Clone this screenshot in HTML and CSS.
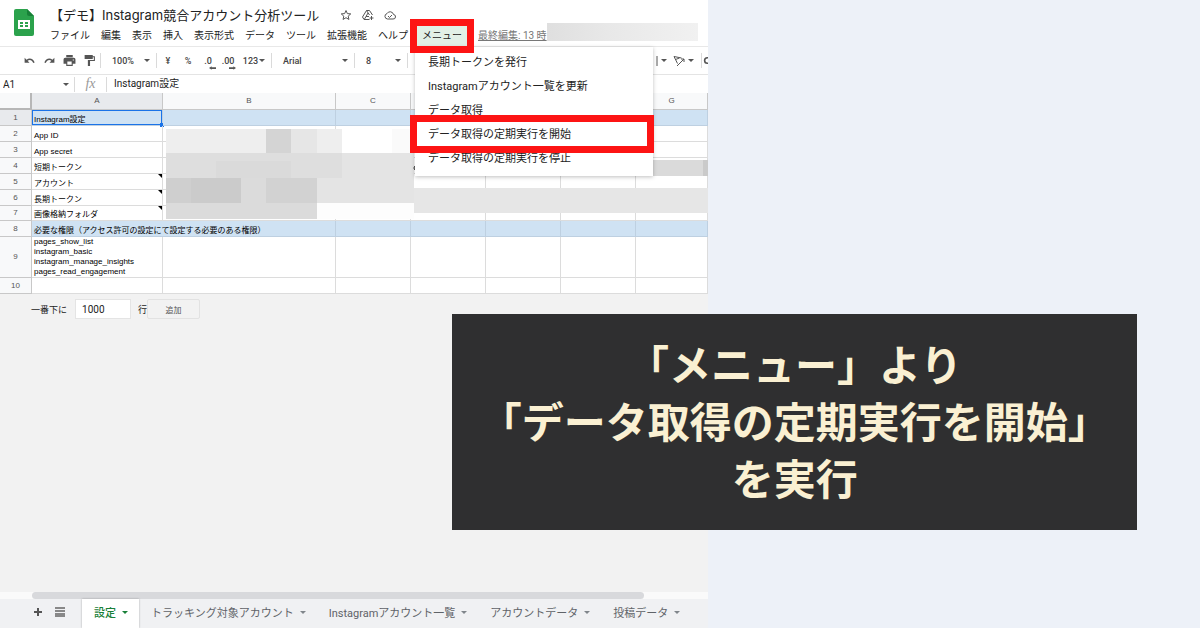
FILE: index.html
```html
<!DOCTYPE html>
<html lang="ja">
<head>
    <meta charset="UTF-8">
    <meta name="viewport" content="width=device-width, initial-scale=1.0">
    <title>【デモ】Instagram競合アカウント分析ツール</title>
    <link rel="stylesheet" href="styles.css">
</head>
<body>
    <main class="sheet">
        <header class="header">
            <svg class="logo" viewBox="0 0 20 27" aria-hidden="true">
                <path d="M2 0h11l7 7v18a2 2 0 0 1-2 2H2a2 2 0 0 1-2-2V2a2 2 0 0 1 2-2z" fill="#2ba24c"/>
                <path d="M13 0l7 7h-5a2 2 0 0 1-2-2z" fill="#188038"/>
                <path d="M4 11h12v9H4zM6 13v2h3v-2zM11 13v2h3v-2zM6 16v2h3v-2zM11 16v2h3v-2z" fill="#fff" fill-rule="evenodd"/>
            </svg>
            <div class="heading">
                <div class="title-row">
                    <h1>【デモ】Instagram競合アカウント分析ツール</h1>
                    <button class="icon-btn" aria-label="スター"><svg viewBox="0 0 24 24"><path d="M12 3l2.700 6.200 6.800.6-5.100 4.500 1.500 6.600L12 17.400l-5.900 3.500 1.500-6.600-5.100-4.500 6.800-.6z" fill="none" stroke="#555" stroke-width="2" stroke-linejoin="round"/></svg></button>
                    <button class="icon-btn" aria-label="移動"><svg viewBox="0 0 24 24"><path d="M15 21H4l-3-5L9 3h6l6 9M9 3l6 9M5 20l3-5h6M12 8l-4 7" fill="none" stroke="#555" stroke-width="2" stroke-linejoin="round"/><path d="M19 14v8M15 18h8" stroke="#555" stroke-width="2"/></svg></button>
                    <button class="icon-btn" aria-label="保存済み"><svg viewBox="0 0 24 24"><path d="M7 20a5.500 5.500 0 0 1-1-10.800A7 7 0 0 1 19 11a4.500 4.500 0 0 1-1 9z" fill="none" stroke="#555" stroke-width="2"/><path d="M8 14l3 3 5-5" fill="none" stroke="#555" stroke-width="2"/></svg></button>
                </div>
                <nav class="menus">
                    <button>ファイル</button>
                    <button>編集</button>
                    <button>表示</button>
                    <button>挿入</button>
                    <button>表示形式</button>
                    <button>データ</button>
                    <button>ツール</button>
                    <button>拡張機能</button>
                    <button>ヘルプ</button>
                    <div class="menu-open marked">
                        <button class="active">メニュー</button>
                        <div class="dropdown">
                            <button>長期トークンを発行</button>
                            <button>Instagramアカウント一覧を更新</button>
                            <button>データ取得</button>
                            <button class="marked">データ取得の定期実行を開始</button>
                            <button>データ取得の定期実行を停止</button>
                        </div>
                    </div>
                    <a href="#" class="last-edit">最終編集: 13 時</a>
                    <span class="masked"></span>
                </nav>
            </div>
        </header>

        <div class="toolbar">
            <button class="tool" aria-label="元に戻す"><svg viewBox="0 0 24 24"><path d="M3 7v9h9l-3.500-3.500c4-3 8-1.500 10.500 4l2.500-1C19 8.500 12 6 6.500 10.500z" fill="#555"/></svg></button>
            <button class="tool" aria-label="やり直し"><svg viewBox="0 0 24 24"><path d="M21 7v9h-9l3.500-3.500c-4-3-8-1.500-10.500 4l-2.500-1C5 8.500 12 6 17.500 10.500z" fill="#555"/></svg></button>
            <button class="tool" aria-label="印刷"><svg viewBox="0 0 24 24"><path d="M6 2h12v4H6zM4 7h16a3 3 0 0 1 3 3v8h-5v4H6v-4H1v-8a3 3 0 0 1 3-3zM8 14v6h8v-6zM18 10v2h2v-2z" fill="#555" fill-rule="evenodd"/></svg></button>
            <button class="tool" aria-label="書式を貼り付け"><svg viewBox="0 0 24 24"><path d="M3 2h15v2h4v9h-9v9h-4V11h11V6h-2v3H3z" fill="#555"/></svg></button>
            <span class="sep"></span>
            <button class="tool zoom">100% <i class="caret"></i></button>
            <span class="sep"></span>
            <button class="tool">¥</button>
            <button class="tool">%</button>
            <button class="tool decimal">.0<svg viewBox="0 0 8 4"><path d="M0 2l3-2v1h5v2H3v1z" fill="#555"/></svg></button>
            <button class="tool decimal">.00<svg viewBox="0 0 8 4"><path d="M8 2L5 0v1H0v2h5v1z" fill="#555"/></svg></button>
            <button class="tool number">123<i class="caret"></i></button>
            <span class="sep"></span>
            <button class="tool font">Arial <i class="caret"></i></button>
            <span class="sep"></span>
            <button class="tool size">8 <i class="caret"></i></button>
            <span class="sep"></span>
            <div class="tools-end">
                <button class="tool rotate" aria-label="折り返し"><svg viewBox="0 0 4 12"><path d="M3 1v10" stroke="#555" stroke-width="1"/></svg><i class="caret"></i></button>
                <button class="tool rotate" aria-label="回転"><svg viewBox="0 0 24 24"><path d="M2 3l15 3M2 3l7 14M5 9l8-3M8 22L22 8M22 8v6M22 8h-6" fill="none" stroke="#555" stroke-width="2"/></svg><i class="caret"></i></button>
                <span class="sep"></span>
                <button class="tool cut" aria-label="リンク"><svg viewBox="0 0 24 24"><path d="M12 7H8a5 5 0 0 0 0 10h4" fill="none" stroke="#555" stroke-width="3"/></svg></button>
            </div>
        </div>

        <div class="formula-bar">
            <input class="name-box" type="text" value="A1" aria-label="名前ボックス">
            <i class="caret"></i>
            <span class="sep"></span>
            <span class="fx">fx</span>
            <span class="sep"></span>
            <input class="formula" type="text" value="Instagram設定" aria-label="数式">
        </div>

        <div class="grid">
            <table>
                <colgroup>
                    <col class="col-num"><col class="col-a"><col class="col-b"><col class="col"><col class="col"><col class="col"><col class="col"><col>
                </colgroup>
                <thead>
                    <tr><th class="corner"></th><th class="selected">A</th><th>B</th><th>C</th><th>D</th><th>E</th><th>F</th><th>G</th></tr>
                </thead>
                <tbody>
                    <tr class="blue"><th class="selected">1</th><td class="cursor">Instagram設定</td><td></td><td></td><td></td><td></td><td></td><td></td></tr>
                    <tr><th>2</th><td>App ID</td><td></td><td></td><td></td><td></td><td></td><td></td></tr>
                    <tr><th>3</th><td>App secret</td><td></td><td></td><td></td><td></td><td></td><td></td></tr>
                    <tr><th>4</th><td>短期トークン</td><td></td><td></td><td></td><td></td><td></td><td></td></tr>
                    <tr><th>5</th><td class="note">アカウント</td><td></td><td></td><td></td><td></td><td></td><td></td></tr>
                    <tr><th>6</th><td class="note">長期トークン</td><td></td><td></td><td></td><td></td><td></td><td></td></tr>
                    <tr class="short"><th>7</th><td class="note">画像格納フォルダ</td><td></td><td></td><td></td><td></td><td></td><td></td></tr>
                    <tr class="blue"><th>8</th><td colspan="2">必要な権限（アクセス許可の設定にて設定する必要のある権限）</td><td></td><td></td><td></td><td></td><td></td></tr>
                    <tr class="tall"><th>9</th><td>pages_show_list<br>instagram_basic<br>instagram_manage_insights<br>pages_read_engagement</td><td></td><td></td><td></td><td></td><td></td><td></td></tr>
                    <tr><th>10</th><td></td><td></td><td></td><td></td><td></td><td></td><td></td></tr>
                </tbody>
            </table>
            <!-- masked cell values -->
            <svg class="mosaic" viewBox="0 0 545 96" aria-hidden="true">
                <path d="M3 4h176v24H3z" fill="#eeeeee"/>
                <path d="M103 4h25v24h-25z" fill="#d4d4d4"/>
                <path d="M128 4h26v24h-26z" fill="#e6e6e6"/>
                <path d="M179 4h73v24h-73z" fill="#ffffff"/>
                <path d="M229 4h23v24h-23z" fill="#fafafa"/>
                <path d="M3 28h248v50H3z" fill="#e4e4e4"/>
                <path d="M3 28h176v25H3z" fill="#dedede"/>
                <path d="M53 36h75v17H53z" fill="#dadada"/>
                <path d="M3 53h151v41H3z" fill="#dbdbdb"/>
                <path d="M3 53h75v25H3z" fill="#cbcbcb"/>
                <path d="M3 53h25v25H3z" fill="#cfcfcf"/>
                <path d="M103 53h51v25h-51z" fill="#d2d2d2"/>
                <path d="M154 78h97v16h-97z" fill="#fdfdfd"/>
                <path d="M251 63h294v25H251z" fill="#e6e6e6"/>
                <path d="M490 35h55v16h-55z" fill="#dadada"/>
                <path d="M540 35h5v16h-5z" fill="#cacaca"/>
                <path d="M253 41a2 2 0 0 0 0 4" fill="none" stroke="#222" stroke-width="1"/>
            </svg>
        </div>

        <form class="add-rows">
            <label for="rows">一番下に</label>
            <input id="rows" type="text" value="1000">
            <span>行</span>
            <button type="button">追加</button>
        </form>

        <footer class="footer">
            <div class="scroll"><div class="thumb"></div></div>
            <div class="tabs">
                <button class="tab-tool" aria-label="シートを追加"><svg viewBox="0 0 10 10"><path d="M5 1v8M1 5h8" stroke="#555" stroke-width="2"/></svg></button>
                <button class="tab-tool" aria-label="すべてのシート"><svg viewBox="0 0 10 10"><path d="M0 1h10M0 4h10M0 7h10M0 9h10" stroke="#666" stroke-width="1.400"/></svg></button>
                <button class="tab current">設定<i class="caret"></i></button>
                <button class="tab">トラッキング対象アカウント<i class="caret"></i></button>
                <button class="tab">Instagramアカウント一覧<i class="caret"></i></button>
                <button class="tab">アカウントデータ<i class="caret"></i></button>
                <button class="tab">投稿データ<i class="caret"></i></button>
            </div>
        </footer>
    </main>

    <p class="caption">「メニュー」より<br>「データ取得の定期実行を開始」<br>を実行</p>
</body>
</html>
```
FILE: styles.css
```css
* {
    box-sizing: border-box;
}
body {
    position: relative;
    margin: 0;
    min-height: 100vh;
    background: #edf1f8;
    font-family: Roboto, "Noto Sans CJK JP", sans-serif;
    font-size: 10px;
    color: #222;
}
button, input {
    font: inherit;
    color: inherit;
    background: none;
    border: none;
    padding: 0;
    margin: 0;
    white-space: nowrap;
}
svg {
    display: block;
}
.sheet {
    width: 59%;
    min-height: 100vh;
    display: flex;
    flex-direction: column;
    background: #f2f2f2;
    overflow: hidden;
}

/* title and menus */
.header {
    display: flex;
    height: 47px;
    padding: 5px 10px 0 14px;
    background: #fff;
    border-bottom: 1px solid #e8e8e8;
}
.logo {
    width: 20px;
    height: 27px;
    margin: 4px 16px 0 0;
}
.heading {
    flex: 1;
}
.title-row {
    display: flex;
    align-items: center;
    height: 20px;
    gap: 10px;
}
h1 {
    margin: 0 11px 0 0;
    font-family: Inter, "Noto Sans CJK JP", sans-serif;
    font-size: 13px;
    font-weight: 400;
    line-height: 20px;
    white-space: nowrap;
}
.icon-btn svg {
    width: 12px;
    height: 12px;
}
.menus {
    display: flex;
    align-items: center;
    gap: 11px;
    height: 22px;
    line-height: 20px;
}
.menu-open {
    position: relative;
    margin-left: -2px;
}
.active {
    padding: 0 5px;
    background: #e2f0e6;
}
.last-edit {
    color: #777;
    white-space: nowrap;
}
.masked {
    flex: 1;
    height: 18px;
    margin: -8px 0 0 -11px;
    background: linear-gradient(90deg, #dfdfdf, #e8e8e8 40%, #f1f1f1);
}
.dropdown {
    position: absolute;
    top: 21px;
    left: -2px;
    width: 238px;
    padding: 4px 0 5px;
    background: #fff;
    box-shadow: 0 1px 4px rgba(0, 0, 0, 0.25);
    z-index: 2;
}
.dropdown button {
    display: block;
    width: 100%;
    height: 24px;
    padding-left: 13px;
    font-size: 11px;
    line-height: 24px;
    text-align: left;
}
/* red frames */
.marked {
    position: relative;
}
.marked::after {
    content: "";
    position: absolute;
    inset: -7px;
    border: 7px solid #fd1414;
    z-index: 3;
}
.dropdown .marked::after {
    inset: -8px -1px -6px -5px;
}

/* toolbar */
.toolbar {
    display: flex;
    align-items: center;
    height: 28px;
    padding-left: 19px;
    background: #fff;
    border-bottom: 1px solid #e4e4e4;
    font-size: 9px;
    font-weight: 500;
    color: #444;
}
.tool {
    display: flex;
    align-items: center;
    justify-content: center;
    width: 20px;
    height: 20px;
}
.tool svg {
    width: 13px;
    height: 13px;
}
.caret {
    flex: none;
    border: 3px solid transparent;
    border-top-color: #555;
    border-bottom: 0;
}
.sep {
    flex: none;
    width: 1px;
    height: 15px;
    background: #dadada;
}
.toolbar .sep {
    margin: 0 1px;
}
.tool.zoom, .tool.font, .tool.size {
    justify-content: space-between;
    padding: 0 5px 0 10px;
}
.tool.zoom {
    width: 53px;
}
.tool.font {
    width: 80px;
}
.tool.size {
    width: 50px;
}
.tool.number {
    width: 32px;
    gap: 1px;
}
.tool.decimal {
    position: relative;
}
.decimal svg {
    position: absolute;
    right: 2px;
    bottom: 1px;
    width: 7px;
    height: 4px;
}
.tools-end {
    display: flex;
    align-items: center;
    margin-left: auto;
}
.tool.rotate {
    width: auto;
    gap: 3px;
    margin-right: 6px;
}
.rotate svg {
    width: auto;
    height: 12px;
}
.tool.cut {
    width: 5px;
    justify-content: flex-start;
    overflow: hidden;
}
.cut svg {
    flex: none;
}

/* formula bar */
.formula-bar {
    display: flex;
    align-items: center;
    height: 18px;
    background: #fff;
}
.name-box {
    width: 63px;
    padding-left: 3px;
}
.formula-bar .caret {
    margin-right: 5px;
}
.fx {
    width: 31px;
    text-align: center;
    font: italic 14px "Liberation Serif", serif;
    color: #999;
}
.formula {
    flex: 1;
    padding-left: 7px;
    line-height: 16px;
}

/* cells */
.grid {
    position: relative;
}
table {
    width: 100%;
    table-layout: fixed;
    border-collapse: separate;
    border-spacing: 0;
    background: #fff;
    font-family: "Liberation Sans", "Noto Sans CJK JP", sans-serif;
    font-size: 8px;
    color: #000;
}
.col-num {
    width: 32px;
}
.col-a {
    width: 131px;
}
.col-b {
    width: 173px;
}
.col {
    width: 75px;
}
th, td {
    height: 16px;
    padding: 0;
    border-right: 1px solid #dcdcdc;
    border-bottom: 1px solid #dcdcdc;
    line-height: 10px;
}
thead th {
    height: 17px;
}
th {
    background: #f8f9fa;
    border-color: #c8c8c8;
    font-weight: 400;
    color: #555;
}
th.selected {
    background: #e8eaed;
}
th.corner {
    border-right: 2px solid #b7b7b7;
    border-bottom: 2px solid #b7b7b7;
}
td {
    position: relative;
    padding: 4px 0 0 2px;
    text-align: left;
    white-space: nowrap;
}
.short th, .short td {
    height: 15px;
}
.blue td {
    background: #cfe2f3;
    border-color: #bed0e1;
}
.tall td {
    height: 41px;
    padding: 0 0 0 2px;
}
td.cursor {
    box-shadow: inset 0 0 0 1px #1a73e8;
}
.cursor::after {
    content: "";
    position: absolute;
    right: -2px;
    bottom: -2px;
    width: 4px;
    height: 4px;
    background: #1a73e8;
}
.note::after {
    content: "";
    position: absolute;
    top: 0;
    right: 0;
    border-top: 4px solid #000;
    border-left: 4px solid transparent;
}
.mosaic {
    position: absolute;
    top: 32px;
    left: 163px;
    width: 545px;
    height: 96px;
}

/* add rows */
.add-rows {
    display: flex;
    align-items: center;
    padding: 5px 0 0 31px;
    font-size: 9px;
}
.add-rows input {
    width: 56px;
    height: 20px;
    margin: 0 7px 0 8px;
    padding-left: 6px;
    background: #fff;
    border: 1px solid #e4e4e4;
    font-size: 10px;
}
.add-rows button {
    width: 53px;
    height: 20px;
    border: 1px solid #e2e2e2;
    border-radius: 2px;
    font-size: 8px;
    color: #555;
}

/* sheet tabs */
.footer {
    margin-top: auto;
}
.scroll {
    height: 7px;
    padding: 0 9% 0 32px;
    background: #fafafa;
}
.thumb {
    height: 7px;
    border-radius: 4px;
    background: #d8d9dc;
}
.tabs {
    display: flex;
    align-items: center;
    height: 29px;
    padding-left: 33px;
    background: #f0f1f3;
    font-size: 11px;
    color: #5f6368;
}
.tab-tool {
    padding: 0 12px 3px 0;
}
.tab-tool svg {
    width: 10px;
    height: 10px;
}
.tab {
    display: flex;
    align-items: center;
    gap: 6px;
    height: 29px;
    padding: 0 11px 3px 12px;
}
.tab .caret {
    border-top-color: #80868b;
}
.tab.current {
    margin-left: 5px;
    background: #fff;
    box-shadow: 0 0 2px rgba(0, 0, 0, 0.3);
    font-weight: 500;
    color: #188038;
}
.tab.current .caret {
    border-top-color: #188038;
}

.caption {
    position: absolute;
    top: 50%;
    left: 37.7%;
    right: 5.25%;
    margin: 0;
    padding: 20px 0 25px;
    background: #2f2f30;
    color: #faf0d2;
    font: 700 42px/57px "Noto Sans CJK JP", sans-serif;
    text-align: center;
    white-space: nowrap;
}
```
